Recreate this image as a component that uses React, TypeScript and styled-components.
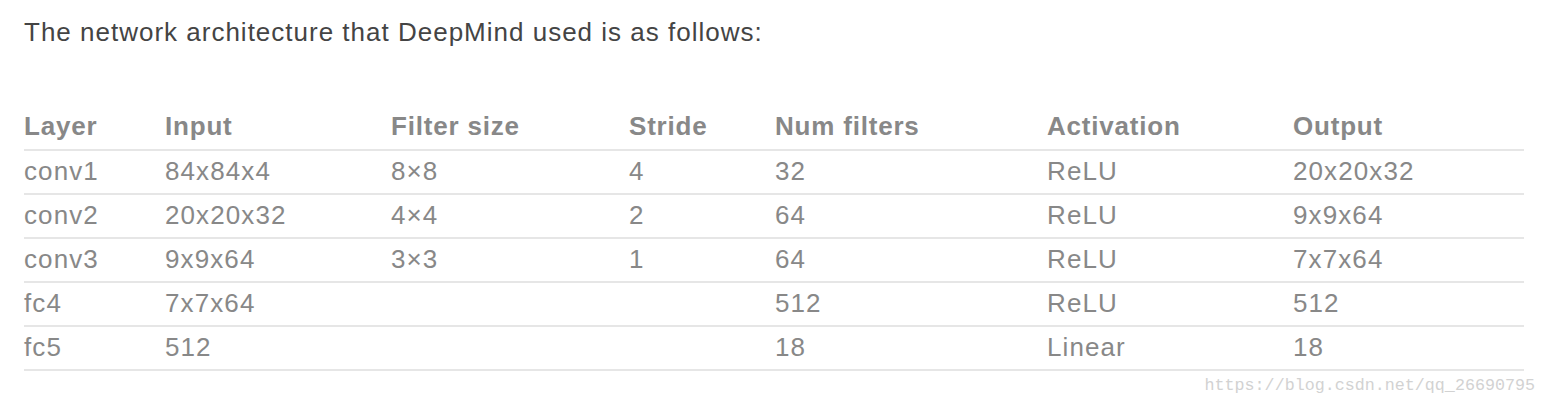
import React from "react";
import styled, { createGlobalStyle } from "styled-components";

const Global = createGlobalStyle`
  html, body { margin: 0; padding: 0; background: #fff; }
  body { font-family: "Liberation Sans", Arial, sans-serif; }
`;

const Page = styled.div`
  position: relative;
  width: 1546px;
  height: 406px;
  padding: 15px 22px 0 24px;
  box-sizing: border-box;
`;

const Title = styled.p`
  margin: 0 0 58px 0;
  font-size: 26px;
  letter-spacing: 1px;
  line-height: 34px;
  color: #444;
`;

const Table = styled.table`
  width: 1500px;
  border-collapse: collapse;
  table-layout: fixed;
`;

const Th = styled.th<{ $w?: number }>`
  width: ${(p) => (p.$w ? `${p.$w}px` : "auto")};
  text-align: left;
  font-weight: bold;
  font-size: 26px;
  letter-spacing: 0.8px;
  color: #888;
  height: 38px;
  padding: 0 0 4px 0;
  border-bottom: 2px solid #e6e6e6;
  vertical-align: middle;
  white-space: nowrap;
`;

const Td = styled.td`
  font-size: 26px;
  letter-spacing: 1.1px;
  color: #888;
  height: 40px;
  padding: 0 0 2px 0;
  border-bottom: 2px solid #e6e6e6;
  vertical-align: middle;
  white-space: nowrap;
`;

const Watermark = styled.span`
  position: absolute;
  right: 11px;
  bottom: 11px;
  font-family: "Liberation Mono", "DejaVu Sans Mono", monospace;
  font-size: 16.7px;
  color: #d2d2d2;
`;

const cols = [
  { name: "Layer", w: 141 },
  { name: "Input", w: 226 },
  { name: "Filter size", w: 238 },
  { name: "Stride", w: 146 },
  { name: "Num filters", w: 272 },
  { name: "Activation", w: 246 },
  { name: "Output", w: 0 },
];

const rows = [
  ["conv1", "84x84x4", "8×8", "4", "32", "ReLU", "20x20x32"],
  ["conv2", "20x20x32", "4×4", "2", "64", "ReLU", "9x9x64"],
  ["conv3", "9x9x64", "3×3", "1", "64", "ReLU", "7x7x64"],
  ["fc4", "7x7x64", "", "", "512", "ReLU", "512"],
  ["fc5", "512", "", "", "18", "Linear", "18"],
];

export default function App() {
  return (
    <>
      <Global />
      <Page>
        <Title>The network architecture that DeepMind used is as follows:</Title>
        <Table>
          <thead>
            <tr>
              {cols.map((c) => (
                <Th key={c.name} $w={c.w || undefined}>
                  {c.name}
                </Th>
              ))}
            </tr>
          </thead>
          <tbody>
            {rows.map((r) => (
              <tr key={r[0]}>
                {r.map((v, i) => (
                  <Td key={i}>{v}</Td>
                ))}
              </tr>
            ))}
          </tbody>
        </Table>
        <Watermark>https://blog.csdn.net/qq_26690795</Watermark>
      </Page>
    </>
  );
}
